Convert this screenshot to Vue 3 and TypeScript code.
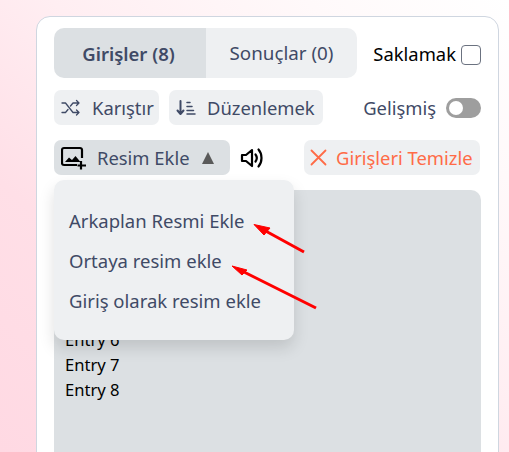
<script setup lang="ts">
const entries: string[] = Array.from({ length: 8 }, (_, i) => `Entry ${i + 1}`)
const menu: string[] = ['Arkaplan Resmi Ekle', 'Ortaya resim ekle', 'Giriş olarak resim ekle']
</script>

<template>
  <div class="page">
    <main class="card">
      <div class="row tabs-row">
        <div class="tabs">
          <button class="tab active">Girişler (8)</button>
          <button class="tab">Sonuçlar (0)</button>
        </div>
        <label class="hide">Saklamak <span class="check"></span></label>
      </div>

      <div class="row actions">
        <button class="btn shuffle">
          <svg width="20" height="20" viewBox="0 0 20 20" fill="none" stroke="#3f4a66" stroke-width="1.300" stroke-linecap="round" stroke-linejoin="round">
            <path d="M1 5h3.500l7.500 9.500h6M1 14.500h3.500l2.500-3M9.500 8l2.500-3h6M15.500 2.500l2.500 2.500-2.500 2.500M15.500 12l2.500 2.500-2.500 2.500" />
          </svg>
          Karıştır
        </button>
        <button class="btn sort">
          <svg width="20" height="20" viewBox="0 0 20 20" fill="none" stroke="#3f4a66" stroke-linecap="round">
            <path d="M4.500 3v12.500M1.500 12.500l3 3.500 3-3.500" stroke-width="2" stroke-linejoin="round" />
            <path d="M11 4.500h3M11 8.500h5M11 12.500h6.500M11 16h8" stroke-width="1.500" />
          </svg>
          Düzenlemek
        </button>
        <div class="advanced">
          <span>Gelişmiş</span>
          <span class="switch"><span class="knob"></span></span>
        </div>
      </div>

      <div class="row tools">
        <div class="image-wrap">
          <button class="btn image">
            <svg width="26" height="24" viewBox="0 0 26 24" fill="none" stroke="#000">
              <path d="M21 12V4a2 2 0 0 0-2-2H3a2 2 0 0 0-2 2v13a2 2 0 0 0 2 2h13" stroke-width="2.200" />
              <path d="M4 16l4-4.500 3 2.500 3.500-4 5 6z" fill="#000" stroke="none" />
              <path d="M20 15v8.500M16.500 19.500h8.500" stroke-width="2.200" />
            </svg>
            <span class="image-label">Resim Ekle</span>
            <span class="caret"></span>
          </button>
          <div class="dropdown">
            <div v-for="item in menu" :key="item" class="menu-item">{{ item }}</div>
          </div>
        </div>
        <svg class="speaker" width="26" height="26" viewBox="0 0 26 26" fill="none" stroke="#000" stroke-width="2.200" stroke-linejoin="round" stroke-linecap="round">
          <path d="M2 10v6h4l6 5V5L6 10z" />
          <path d="M15.500 9.500c1.500 2 1.500 5 0 7M18.500 4.500c4 4.500 4 12.500 0 17" />
        </svg>
        <button class="btn clear">
          <svg width="17" height="17" viewBox="0 0 17 17" fill="none" stroke="#ff6b47" stroke-width="1.800" stroke-linecap="round">
            <path d="M1.500 1.500l14 14M15.500 1.500l-14 14" />
          </svg>
          Girişleri Temizle
        </button>
      </div>

      <div class="entries">
        <div v-for="entry in entries" :key="entry">{{ entry }}</div>
      </div>
    </main>

    <svg class="annotations" width="509" height="452" viewBox="0 0 509 452">
      <g fill="#ff0000" stroke="#ff0000">
        <path d="M304 252L262 229" stroke-width="3" />
        <path d="M254 224.500L270 228L264 235z" stroke-width="1" />
        <path d="M316 308L240 270" stroke-width="3" />
        <path d="M232 266L247 270L242 275z" stroke-width="1" />
      </g>
    </svg>
  </div>
</template>

<style>
html, body { margin: 0; background: #fff; }
</style>

<style scoped>
.page {
  position: relative;
  width: 509px;
  height: 452px;
  overflow: hidden;
  padding: 16px 10px 0 36px;
  box-sizing: border-box;
  background: linear-gradient(to top right, #ffd9e3 0%, #ffdfe7 30%, #ffeef2 55%, #fff9fa 80%, #ffffff 100%);
  font-family: "Noto Sans", "Open Sans", sans-serif;
}
.card {
  height: 460px;
  box-sizing: border-box;
  padding: 11px 17px 0;
  background: #fff;
  border: 1px solid #cfd6e0;
  border-radius: 14px;
}
.row { display: flex; align-items: center; }
.tabs-row { height: 50px; justify-content: space-between; }
.tabs { display: flex; height: 50px; width: 303px; border-radius: 10px; overflow: hidden; }
.tab {
  border: 0;
  padding: 0 3px 0 0;
  background: #eef0f2;
  color: #3f4a66;
  font: 18.500px "Noto Sans", sans-serif;
  flex: 0 0 152px;
  white-space: nowrap;
}
.tab + .tab { flex: 0 0 151px; font-size: 18.800px; padding: 0; }
.tab.active { background: #dce0e3; font-weight: 600; }
.hide { display: flex; align-items: center; gap: 5px; color: #000; font-size: 18.400px; }
.check {
  width: 18px;
  height: 18px;
  border: 1px solid #6b7280;
  border-radius: 4px;
  background: #fff;
  margin-top: 3px;
}
.actions { margin-top: 12px; height: 35px; gap: 10px; }
.btn {
  display: inline-flex;
  align-items: center;
  height: 35px;
  border: 0;
  border-radius: 7px;
  background: #eef0f2;
  color: #3f4a66;
  font: 18.400px "Noto Sans", sans-serif;
  white-space: nowrap;
  padding: 0;
}
.shuffle { width: 105px; padding-left: 7px; gap: 11px; box-sizing: border-box; }
.sort { width: 154px; padding-left: 7px; gap: 11px; box-sizing: border-box; }
.advanced { margin-left: auto; display: flex; align-items: center; gap: 10px; color: #3f4a66; font-size: 18.400px; }
.switch { width: 35px; height: 20px; border-radius: 10px; background: #9e9e9e; display: flex; align-items: center; padding-left: 3px; box-sizing: border-box; }
.knob { width: 14px; height: 14px; border-radius: 50%; background: #fff; }
.tools { margin-top: 15px; height: 35px; }
.image-wrap { position: relative; }
.image { width: 176px; padding-left: 7px; box-sizing: border-box; background: #dce0e3; }
.image-label { margin-left: 10px; }
.caret {
  margin-left: 12px;
  border-left: 6px solid transparent;
  border-right: 6px solid transparent;
  border-bottom: 12px solid #5a5a5a;
}
.speaker { margin-left: 10px; }
.clear { margin-left: auto; margin-right: 1px; width: 176px; box-sizing: border-box; padding-left: 6px; gap: 9px; color: #ff6b47; }
.dropdown {
  position: absolute;
  left: 0;
  top: 40px;
  width: 240px;
  height: 160px;
  box-sizing: border-box;
  padding: 21px 15px;
  background: #eef0f2;
  border-radius: 10px;
  box-shadow: 0 8px 16px rgba(0, 0, 0, 0.13);
  z-index: 2;
}
.menu-item { height: 40px; line-height: 40px; color: #3f4a66; font-size: 18.500px; white-space: nowrap; }
.entries {
  margin-top: 15px;
  height: 300px;
  box-sizing: border-box;
  padding: 12px 11px;
  border-radius: 10px;
  background: #dce0e3;
  color: #000;
  font-size: 16.600px;
  line-height: 25px;
}
.annotations { position: absolute; left: 0; top: 0; z-index: 3; pointer-events: none; }
</style>
